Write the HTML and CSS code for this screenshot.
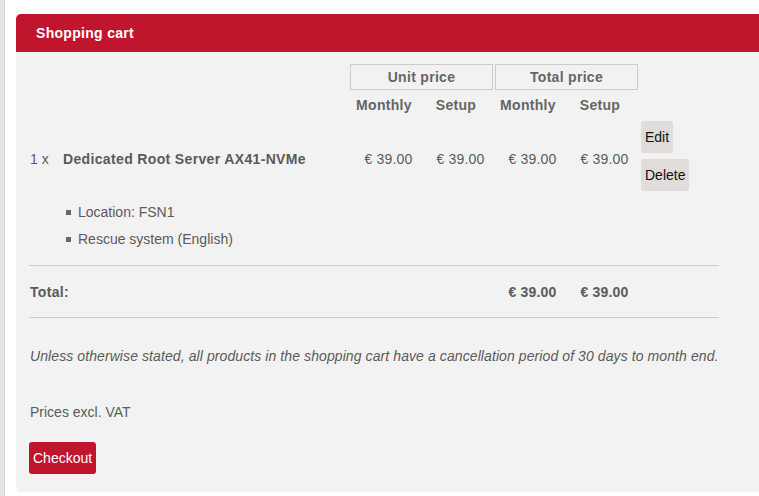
FILE: index.html
```html
<!DOCTYPE html>
<html>
  <head>
    <meta charset="utf-8">
    <title>Shopping cart</title>
    <link rel="stylesheet" href="styles.css">
  </head>
  <body>
    <div class="page">
      <div class="panel">
        <div class="panel-head">Shopping cart</div>
        <div class="panel-body">
          <div class="cart-grid">
            <div class="group unit">Unit price</div>
            <div class="group total">Total price</div>

            <div class="col-head c3">Monthly</div>
            <div class="col-head c4">Setup</div>
            <div class="col-head c5">Monthly</div>
            <div class="col-head c6">Setup</div>

            <div class="qty">1 x</div>
            <div class="product">Dedicated Root Server AX41-NVMe</div>
            <div class="price">&euro; 39.00</div>
            <div class="price">&euro; 39.00</div>
            <div class="price">&euro; 39.00</div>
            <div class="price">&euro; 39.00</div>
            <div class="actions">
              <button class="btn">Edit</button>
              <button class="btn">Delete</button>
            </div>
          </div>

          <ul class="options">
            <li>Location: FSN1</li>
            <li>Rescue system (English)</li>
          </ul>

          <div class="total-row">
            <div class="total-label">Total:</div>
            <div class="price c5">&euro; 39.00</div>
            <div class="price c6">&euro; 39.00</div>
          </div>

          <p class="note">Unless otherwise stated, all products in the shopping cart have a cancellation period of 30 days to month end.</p>
          <p class="vat">Prices excl. VAT</p>
          <button class="checkout">Checkout</button>
        </div>
      </div>
    </div>
  </body>
</html>
```

FILE: styles.css
```css
* {
  margin: 0;
  padding: 0;
  box-sizing: border-box;
}
html {
  overflow: hidden;
  background: #fff;
}
body {
  border-left: 4px solid #e3e3e3;
  font-family: "Liberation Sans", Arial, sans-serif;
  font-size: 14px;
  color: #5a5a5a;
  min-height: 100vh;
}
.page {
  border-left: 1px solid #d3d3d3;
  min-height: 100vh;
  padding: 14px 0 0 11px;
}
.panel {
  width: 780px;
  background: #f2f2f2;
  border-radius: 5px;
  overflow: hidden;
}
.panel-head {
  background: #c0152d;
  color: #fff;
  font-weight: bold;
  letter-spacing: 0.3px;
  height: 38px;
  line-height: 38px;
  padding-left: 20px;
}
.panel-body {
  width: 716px;
  padding: 12px 13px 18px 13px;
}

/* item table */
.cart-grid {
  display: grid;
  grid-template-columns: 34px 287px repeat(4, 72px) 1fr;
  grid-template-rows: 26px 30px auto;
}
.group {
  grid-row: 1;
  border: 1px solid #cbcbcb;
  line-height: 24px;
  text-align: center;
  font-weight: bold;
  letter-spacing: 0.3px;
  color: #666;
}
.group.unit {
  grid-column: 3 / 5;
  margin-right: 1px;
}
.group.total {
  grid-column: 5 / 7;
  margin-left: 1px;
}
.col-head {
  grid-row: 2;
  text-align: center;
  padding-right: 4px;
  line-height: 30px;
  font-weight: bold;
  letter-spacing: 0.3px;
  color: #666;
}
.c3 { grid-column: 3; }
.c4 { grid-column: 4; }
.c5 { grid-column: 5; }
.c6 { grid-column: 6; }

.qty,
.product,
.price {
  grid-row: 3;
  align-self: center;
  padding-top: 4px;
}
.qty {
  grid-column: 1;
  padding-left: 1px;
}
.product {
  grid-column: 2;
  font-weight: bold;
  letter-spacing: 0.35px;
}
.price {
  text-align: center;
  padding-left: 5px;
  letter-spacing: 0.2px;
}
.actions {
  grid-row: 3;
  grid-column: 7;
  display: flex;
  flex-direction: column;
  align-items: flex-start;
  gap: 6px;
  padding: 1px 0 3px 3px;
}
.btn {
  font-family: "Liberation Sans", Arial, sans-serif;
  font-size: 14px;
  color: #111;
  background: #e0dcd9;
  border: none;
  border-radius: 3px;
  line-height: 16px;
  padding: 8px 4px;
}

/* options under the item */
.options {
  list-style: none;
  margin: 5px 0 12px;
}
.options li {
  line-height: 27px;
  padding-left: 37px;
}
.options li::before {
  content: "";
  display: inline-block;
  width: 5px;
  height: 5px;
  background: #666;
  margin-right: 7px;
  vertical-align: 2px;
}

.total-row {
  display: grid;
  grid-template-columns: 34px 287px repeat(4, 72px) 1fr;
  border-top: 1px solid #cccccc;
  border-bottom: 1px solid #cccccc;
  height: 53px;
  align-items: center;
  font-weight: bold;
  letter-spacing: 0.3px;
}
.total-label {
  grid-column: 1 / 3;
  padding-left: 1px;
}
.total-row .price {
  grid-row: 1;
  padding-top: 0;
}

.note {
  font-style: italic;
  letter-spacing: 0.09px;
  line-height: 20px;
  margin-top: 28px;
  padding-left: 1px;
  white-space: nowrap;
}
.vat {
  line-height: 20px;
  margin-top: 36px;
  padding-left: 1px;
}
.checkout {
  margin-top: 20px;
  font-family: "Liberation Sans", Arial, sans-serif;
  font-size: 14px;
  color: #fff;
  background: #c0152d;
  border: none;
  border-radius: 3px;
  line-height: 16px;
  padding: 8px 4px;
}
```
